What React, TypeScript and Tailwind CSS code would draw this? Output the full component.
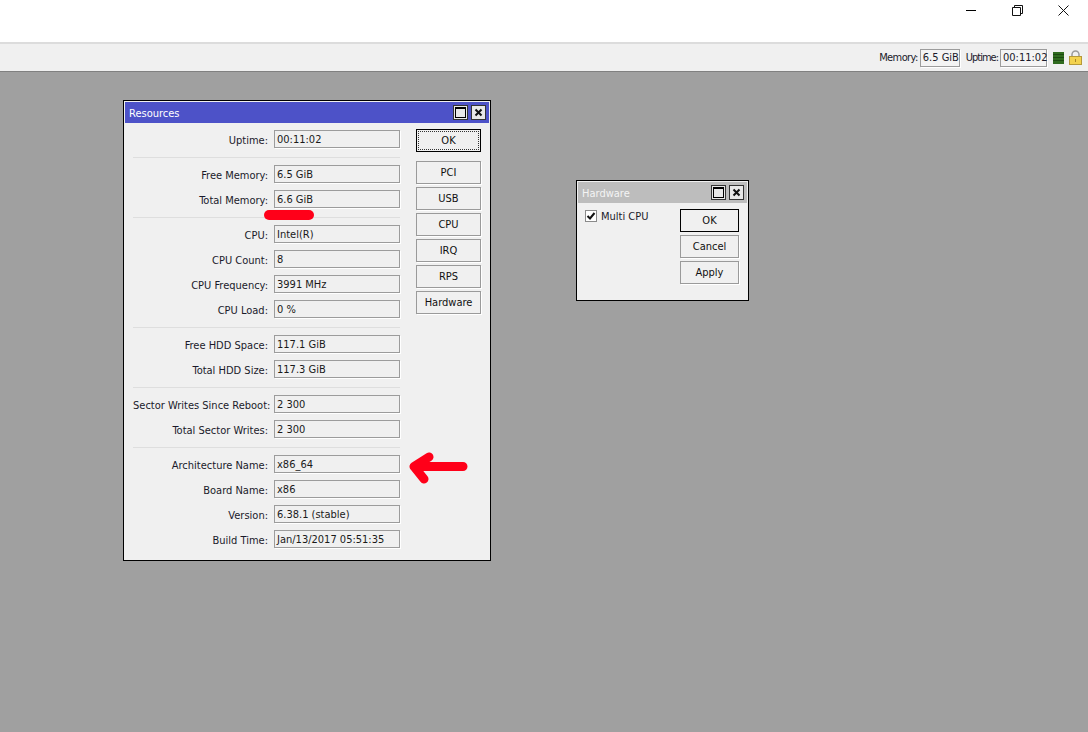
import React from "react";

const font = { fontFamily: '"DejaVu Sans Condensed", "Liberation Sans", Arial, sans-serif', fontStretch: "condensed" };

const groups = [
  [["Uptime:", "00:11:02"]],
  [
    ["Free Memory:", "6.5 GiB"],
    ["Total Memory:", "6.6 GiB"],
  ],
  [
    ["CPU:", "Intel(R)"],
    ["CPU Count:", "8"],
    ["CPU Frequency:", "3991 MHz"],
    ["CPU Load:", "0 %"],
  ],
  [
    ["Free HDD Space:", "117.1 GiB"],
    ["Total HDD Size:", "117.3 GiB"],
  ],
  [
    ["Sector Writes Since Reboot:", "2 300"],
    ["Total Sector Writes:", "2 300"],
  ],
  [
    ["Architecture Name:", "x86_64"],
    ["Board Name:", "x86"],
    ["Version:", "6.38.1 (stable)"],
    ["Build Time:", "Jan/13/2017 05:51:35"],
  ],
];

function TitleButtons() {
  return (
    <div className="flex gap-[3px]">
      <div className="w-[15px] h-[15px] border border-[#333] bg-[#e8e8e8] flex items-center justify-center">
        <div className="w-[11px] h-[11px] border border-black border-t-2" />
      </div>
      <div className="w-[15px] h-[15px] border border-[#333] bg-[#e8e8e8] flex items-center justify-center">
        <svg width="9" height="9" viewBox="0 0 9 9">
          <path d="M1.5 1.5L7.5 7.5M7.5 1.5L1.5 7.5" stroke="#111" strokeWidth="2" />
        </svg>
      </div>
    </div>
  );
}

function Btn({ label, focused }: { label: string; focused?: boolean }) {
  if (focused) {
    return (
      <div className="h-[23px] w-[65px] border border-black p-px">
        <div className="h-full border border-dotted border-[#333] flex items-center justify-center text-[#111] pt-[2px]">
          {label}
        </div>
      </div>
    );
  }
  return (
    <div className="h-[23px] w-[65px] border border-[#9a9a9a] shadow-[1px_1px_0_#fff] flex items-center justify-center text-[#111] pt-[2px]">
      {label}
    </div>
  );
}

function Row({ label, value }: { label: string; value: string }) {
  return (
    <div className="flex items-start h-[19px]">
      <div className="w-[135px] text-right whitespace-nowrap text-[#1a1a2a] pt-[3px]">{label}</div>
      <div className="ml-[6px] w-[126px] h-[18px] border border-[#9c9c9c] shadow-[1px_1px_0_#fff] pl-[2px] pt-[3px] flex items-center text-[#1a1a1a] whitespace-nowrap">
        {value}
      </div>
    </div>
  );
}

export default function App() {
  return (
    <div className="w-[1088px] h-[732px] overflow-hidden flex flex-col bg-[#a0a0a0] text-[11px]" style={font}>
      <div className="h-[42px] bg-white shrink-0 flex justify-end pr-[2px]">
        <div className="w-[46px] h-[20px] flex items-center justify-center">
          <div className="w-[10px] h-px bg-black" />
        </div>
        <div className="w-[46px] h-[20px] flex items-center justify-center">
          <svg width="11" height="11" viewBox="0 0 11 11" fill="none" stroke="#111">
            <path d="M0.5 2.5H8.5V10.5H0.5Z" />
            <path d="M2.5 2.5V0.5H10.5V8.5H8.5" />
          </svg>
        </div>
        <div className="w-[46px] h-[20px] flex items-center justify-center">
          <svg width="11" height="11" viewBox="0 0 11 11" fill="none" stroke="#111">
            <path d="M0.5 0.5L10.5 10.5M10.5 0.5L0.5 10.5" />
          </svg>
        </div>
      </div>
      <div className="h-[30px] shrink-0 bg-[#f0f0f0] border-t-2 border-t-[#dcdcdc] border-b border-b-[#808080] flex items-center justify-end pr-[6px] text-[#1a1a2a]">
        <span className="whitespace-nowrap tracking-[-0.6px] pt-[2px]">Memory:</span>
        <div className="w-[40px] h-[18px] border border-[#9c9c9c] bg-[#f4f4f4] flex items-center pl-[2px] pt-[2px] ml-[2px] shadow-[1px_1px_0_#fff] whitespace-nowrap">6.5 GiB</div>
        <span className="ml-[6px] whitespace-nowrap tracking-[-1px] pt-[2px]">Uptime:</span>
        <div className="w-[47px] h-[18px] border border-[#9c9c9c] bg-[#f4f4f4] flex items-center pl-[2px] pt-[2px] ml-[2px] shadow-[1px_1px_0_#fff] whitespace-nowrap">00:11:02</div>
        <div className="ml-[6px] w-[11px] h-[12px] bg-[#2f6b1f] flex flex-col justify-evenly">
          <div className="h-px bg-[#1d4a12]" />
          <div className="h-px bg-[#1d4a12]" />
          <div className="h-px bg-[#1d4a12]" />
        </div>
        <svg className="ml-[5px]" width="13" height="15" viewBox="0 0 13 15">
          <path d="M3 7V4.5a3.5 3.5 0 0 1 7 0V7" fill="none" stroke="#9a9a9a" strokeWidth="1.5" />
          <rect x="0.5" y="6.5" width="12" height="8" fill="#f3d24e" stroke="#b59a3a" />
          <rect x="6" y="9" width="1" height="3" fill="#a8862a" />
        </svg>
      </div>
      <div className="relative flex-1">
        {/* Resources window */}
        <div className="absolute left-[123px] top-[28px] w-[368px] h-[461px] border border-black bg-[#f0f0f0] p-px">
          <div className="h-[21px] bg-[#4d52c8] flex items-center justify-between pl-[4px] pr-[3px] text-white">
            <span className="pt-[4px]">Resources</span>
            <TitleButtons />
          </div>
          <div className="flex pl-[8px] pt-[7px]">
            <div className="w-[267px]">
              {groups.map((rows, i) => (
                <div key={i} className={i > 0 ? "border-t border-t-[#dedede] mt-[8px] pt-[7px] flex flex-col gap-[6px]" : "flex flex-col gap-[6px]"}>
                  {rows.map(([label, value]) => (
                    <Row key={label} label={label} value={value} />
                  ))}
                </div>
              ))}
            </div>
            <div className="ml-[16px] flex flex-col -mt-px">
              <div className="mb-[9px]">
                <Btn label="OK" focused />
              </div>
              <div className="flex flex-col gap-[3px]">
                {["PCI", "USB", "CPU", "IRQ", "RPS", "Hardware"].map((b) => (
                  <Btn key={b} label={b} />
                ))}
              </div>
            </div>
          </div>
        </div>
        {/* Hardware window */}
        <div className="absolute left-[576px] top-[108px] w-[173px] h-[121px] border border-black bg-[#f0f0f0] p-px">
          <div className="h-[21px] bg-[#bdbdbd] flex items-center justify-between pl-[4px] pr-[3px] text-[#f4f4f4]">
            <span className="pt-[4px]">Hardware</span>
            <TitleButtons />
          </div>
          <div className="flex pl-[7px] pt-[6px]">
            <div className="w-[95px] flex items-start gap-[3px] text-[#1a1a2a]">
              <div className="w-[12px] h-[12px] mt-[1px] border border-[#8a8a8a] bg-white flex items-center justify-center">
                <svg width="10" height="10" viewBox="0 0 10 10">
                  <path d="M1.5 5L4 7.5L8.5 2" fill="none" stroke="#111" strokeWidth="2" />
                </svg>
              </div>
              <span className="ml-[1px]">Multi CPU</span>
            </div>
            <div className="flex flex-col gap-[3px]">
              <div className="w-[59px] h-[23px] border border-black flex items-center justify-center text-[#111] pt-[2px]">OK</div>
              <div className="w-[59px] h-[23px] border border-[#9a9a9a] shadow-[1px_1px_0_#fff] flex items-center justify-center text-[#111] pt-[2px]">Cancel</div>
              <div className="w-[59px] h-[23px] border border-[#9a9a9a] shadow-[1px_1px_0_#fff] flex items-center justify-center text-[#111] pt-[2px]">Apply</div>
            </div>
          </div>
        </div>
        {/* red annotations */}
        <div className="absolute left-[264px] top-[138px] w-[50px] h-[10px] rounded-full bg-[#ff0019]" />
        <svg className="absolute left-[405px] top-[380px]" width="70" height="36" viewBox="0 0 70 36">
          <path d="M58 14.5H14M24 5L9 14.5L19 27" fill="none" stroke="#ff0019" strokeWidth="9" strokeLinecap="round" strokeLinejoin="round" />
        </svg>
      </div>
    </div>
  );
}
